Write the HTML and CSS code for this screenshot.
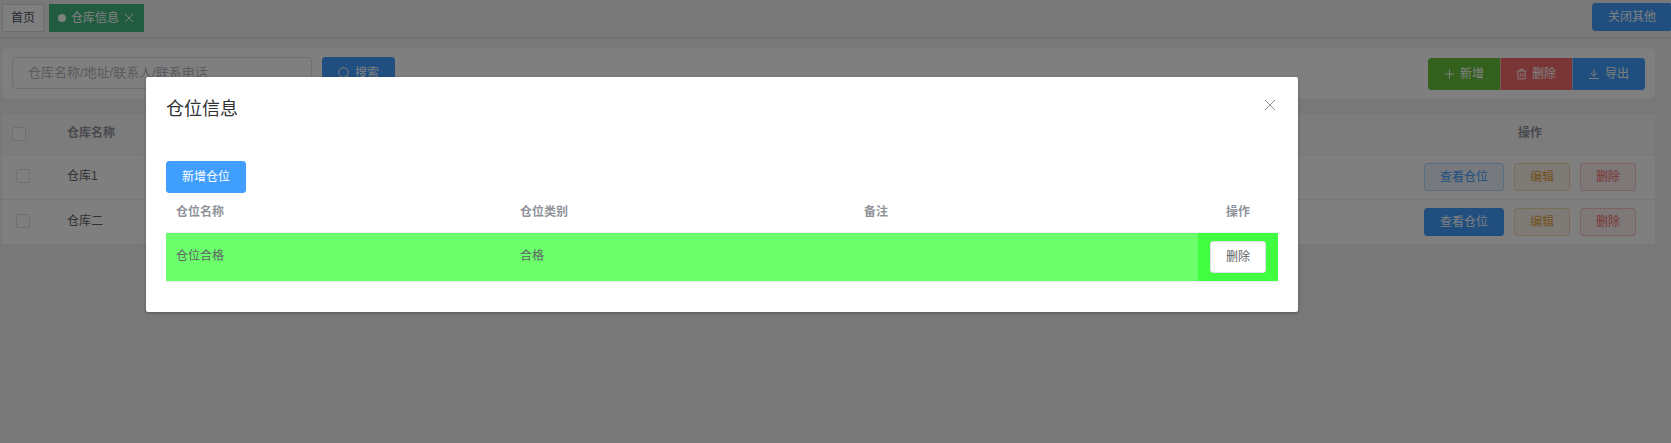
FILE: index.html
```html
<!DOCTYPE html>
<html lang="zh-CN">
<head>
<meta charset="utf-8">
<title>仓库信息</title>
<link rel="stylesheet" href="styles.css">
</head>
<body>
<div class="app">
  <nav class="tags">
    <span class="tag">首页</span>
    <span class="tag tag-active"><i class="dot"></i><span>仓库信息</span><svg class="tag-close" viewBox="0 0 10 10"><path d="M1 1l8 8M9 1l-8 8"/></svg></span>
    <button class="btn btn-mini btn-primary close-others">关闭其他</button>
  </nav>
  <section class="toolbar">
    <input class="search-input" type="text" placeholder="仓库名称/地址/联系人/联系电话">
    <button class="btn btn-primary"><svg class="icon" viewBox="0 0 12 12"><circle cx="5.500" cy="5.500" r="4.800"/><path d="M8.900 8.900l2.300 2.300"/></svg>搜索</button>
    <div class="btn-group">
      <button class="btn btn-success"><svg class="icon" viewBox="0 0 12 12"><path d="M6 .8v10.400M.8 6h10.400"/></svg>新增</button>
      <button class="btn btn-danger"><svg class="icon" viewBox="0 0 12 12"><path d="M.8 2.800h10.400M4 2.500V1h4v1.500M2 3v8.300h8V3M4.700 5v4M7.300 5v4"/></svg>删除</button>
      <button class="btn btn-primary"><svg class="icon" viewBox="0 0 12 12"><path d="M6 1v7M2.800 5L6 8.200 9.200 5M1 10.500h10"/></svg>导出</button>
    </div>
  </section>
  <section class="table">
    <div class="row row-head">
      <div class="cell-check"><i class="checkbox"></i></div>
      <div class="cell-name">仓库名称</div>
      <div class="cell-actions">操作</div>
    </div>
    <div class="row">
      <div class="cell-check"><i class="checkbox"></i></div>
      <div class="cell-name">仓库1</div>
      <div class="cell-actions">
        <button class="btn btn-mini plain-primary">查看仓位</button>
        <button class="btn btn-mini plain-warning">编辑</button>
        <button class="btn btn-mini plain-danger">删除</button>
      </div>
    </div>
    <div class="row">
      <div class="cell-check"><i class="checkbox"></i></div>
      <div class="cell-name">仓库二</div>
      <div class="cell-actions">
        <button class="btn btn-mini btn-primary">查看仓位</button>
        <button class="btn btn-mini plain-warning">编辑</button>
        <button class="btn btn-mini plain-danger">删除</button>
      </div>
    </div>
  </section>
</div>
<div class="overlay">
  <div class="dialog" role="dialog">
    <header class="dialog-head">
      <h2 class="dialog-title">仓位信息</h2>
      <svg class="dialog-close" viewBox="0 0 12 12"><path d="M1 1l10 10M11 1L1 11"/></svg>
    </header>
    <button class="btn btn-primary">新增仓位</button>
    <div class="slots">
      <div class="slot-row slot-head"><div>仓位名称</div><div>仓位类别</div><div>备注</div><div class="slot-op">操作</div></div>
      <div class="slot-row slot-ok"><div>仓位合格</div><div>合格</div><div></div><div class="slot-op"><button class="btn btn-default">删除</button></div></div>
    </div>
  </div>
</div>
</body>
</html>
```
FILE: styles.css
```css
* { box-sizing: border-box; }

body {
  margin: 0;
  height: 443px;
  overflow: hidden;
  background: #f0f0f0;
  color: #606266;
  font: 12px/1 "Liberation Sans", "Noto Sans CJK SC", sans-serif;
}

svg { fill: none; stroke: currentColor; }

.tags {
  display: flex;
  align-items: flex-start;
  height: 38px;
  padding: 4px 0 0 2px;
  border-bottom: 1px solid #d8dce5;
  overflow: hidden;
}

.tag {
  display: flex;
  align-items: center;
  height: 28px;
  margin-right: 5px;
  padding: 0 8px;
  border: 1px solid #d8dce5;
  background: #fff;
  color: #495060;
}

.tag-active {
  width: 95px;
  border-color: #42b983;
  background: #42b983;
  color: #fff;
}

.dot { width: 8px; height: 8px; margin-right: 5px; border-radius: 50%; background: #fff; }
.tag-close { width: 10px; height: 10px; margin-left: 5px; flex: none; }

.close-others { width: 80px; margin: -1px -1px 0 auto; }

.btn {
  display: inline-flex;
  align-items: center;
  justify-content: center;
  height: 32px;
  padding: 0 15px;
  border: 1px solid transparent;
  border-radius: 3px;
  color: #fff;
  font: inherit;
  white-space: nowrap;
}

.btn-mini { height: 28px; }
.icon { width: 12px; height: 12px; margin-right: 5px; }
.btn-primary { background: #409eff; border-color: #409eff; }
.btn-success { background: #67c23a; border-color: #67c23a; }
.btn-danger { background: #f56c6c; border-color: #f56c6c; }
.btn-default { background: #fff; border-color: #dcdfe6; color: #606266; }
.plain-primary { background: #ecf5ff; border-color: #b3d8ff; color: #409eff; }
.plain-warning { background: #fdf6ec; border-color: #f5dab1; color: #e6a23c; }
.plain-danger { background: #fef0f0; border-color: #fbc4c4; color: #f56c6c; }

.toolbar {
  display: flex;
  align-items: flex-start;
  height: 50px;
  margin: 10px 16px 0 2px;
  padding: 9px 10px;
  border-radius: 5px;
  background: #fff;
}

.search-input {
  width: 300px;
  height: 32px;
  margin-right: 10px;
  padding: 0 15px 2px;
  border: 1px solid #dcdfe6;
  border-radius: 4px;
  background: #fff;
  font: 13px "Liberation Sans", "Noto Sans CJK SC", sans-serif;
}

.search-input::placeholder { color: #b4b8bf; }

.btn-group { display: flex; margin: 1px 0 0 auto; }
.btn-group .btn { width: 72px; border-radius: 0; }
.btn-group .btn:first-child { border-radius: 3px 0 0 3px; }
.btn-group .btn:last-child { width: 73px; border-radius: 0 3px 3px 0; }
.btn-group .btn + .btn { border-left-color: rgba(255, 255, 255, .5); }

.table { margin: 16px 16px 0 2px; background: #fff; }

.row {
  display: flex;
  align-items: center;
  height: 45px;
  border-bottom: 1px solid #ebeef5;
}

.row:last-child { height: 44px; border-bottom: 0; }
.row-head { height: 41px; background: #f8f8f9; color: #909399; font-weight: 700; }
.row-head .cell-check { padding-left: 10px; }
.cell-check { width: 55px; padding: 0 0 2px 14px; }
.cell-name { flex: 1; padding: 0 0 2px 10px; }
.cell-actions { display: flex; justify-content: center; gap: 10px; width: 250px; }
.row-head .cell-actions { padding-bottom: 2px; }

.checkbox {
  display: block;
  width: 14px;
  height: 14px;
  border: 1px solid #dcdfe6;
  border-radius: 2px;
  background: #fff;
}

.row-head .cell-check { padding-bottom: 1px; }

.overlay {
  position: absolute;
  inset: 0;
  background: rgba(0, 0, 0, .5);
}

.dialog {
  width: 1152px;
  height: 235px;
  margin: 77px 0 0 146px;
  padding: 0 20px;
  border-radius: 2px;
  background: #fff;
  box-shadow: 0 1px 3px rgba(0, 0, 0, .3);
}

.dialog-head { display: flex; justify-content: space-between; height: 84px; padding-top: 22px; }
.dialog-title { margin: 0; padding-top: 1px; color: #303133; font-size: 18px; font-weight: 400; line-height: 18px; }
.dialog-close { width: 12px; height: 12px; margin-right: 2px; color: #909399; }

.slot-row {
  display: grid;
  grid-template-columns: repeat(3, 344px) 80px;
  align-items: center;
  height: 49px;
  border-bottom: 1px solid #ebeef5;
}

.slot-row > div { padding: 0 0 2px 10px; }
.slot-head { height: 40px; color: #909399; font-weight: 700; }
.slot-ok { background: #6cff6c; background-clip: padding-box; }
.slot-row > .slot-op { display: flex; justify-content: center; align-items: center; padding: 0 0 2px; }
.slot-row.slot-ok > .slot-op { height: 48px; padding: 0; background: #40ff40; }
.btn-default { width: 56px; }
```
